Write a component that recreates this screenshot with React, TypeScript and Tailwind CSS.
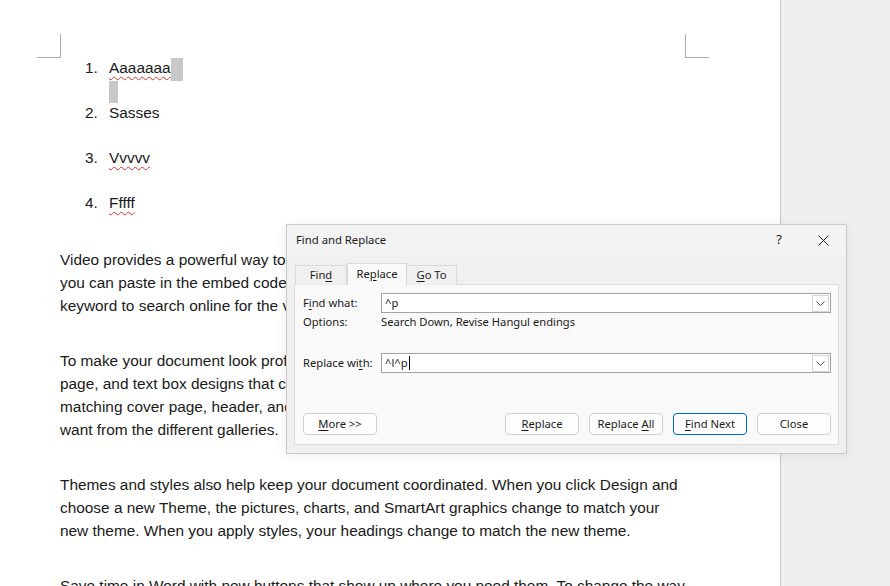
import React from 'react';

const docFont = "font-['Liberation_Sans',Arial,sans-serif]";
const uiFont = "font-['Noto_Sans','Open_Sans',sans-serif]";

const para1 = [
  'Video provides a powerful way to help you prove your point. When you click Online Video,',
  'you can paste in the embed code for the video you want to add. You can also type a',
  'keyword to search online for the video that best fits your document.',
];
const para2 = [
  'To make your document look professionally produced, Word provides header, footer, cover',
  'page, and text box designs that complement each other. For example, you can add a',
  'matching cover page, header, and sidebar. Click Insert and then choose the elements you',
  'want from the different galleries.',
];
const para3 = [
  'Themes and styles also help keep your document coordinated. When you click Design and',
  'choose a new Theme, the pictures, charts, and SmartArt graphics change to match your',
  'new theme. When you apply styles, your headings change to match the new theme.',
];
const para4 = [
  'Save time in Word with new buttons that show up where you need them. To change the way',
];

const Key = ({ children }: { children: React.ReactNode }) => (
  <span className="underline underline-offset-[2px] decoration-1">{children}</span>
);

const Misspelled = ({ children }: { children: React.ReactNode }) => (
  <span className="underline decoration-wavy decoration-[#e0302a] decoration-1 underline-offset-[3px]">{children}</span>
);

const Paragraph = ({ lines, last }: { lines: string[]; last?: boolean }) => (
  <div className={last ? '' : 'mb-[32px]'}>
    {lines.map((l) => (
      <div key={l} className="whitespace-nowrap h-[23px]">{l}</div>
    ))}
  </div>
);

const Chevron = () => (
  <svg width="9" height="5" viewBox="0 0 9 5" fill="none">
    <path d="M0.5 0.5 L4.5 4.5 L8.5 0.5" stroke="#555" strokeWidth="1" />
  </svg>
);

const ComboBox = ({ children }: { children: React.ReactNode }) => (
  <div className="w-[450px] h-[20px] border border-[#a3a3a3] bg-white flex items-center">
    <div className="flex-1 pl-[3px] flex items-center">{children}</div>
    <div className="w-[17px] h-[17px] mr-[1px] border border-[#d4d4d4] flex items-center justify-center">
      <Chevron />
    </div>
  </div>
);

const Button = ({ children, primary }: { children: React.ReactNode; primary?: boolean }) => (
  <div
    className={`w-[74px] h-[22px] rounded-[4px] bg-[#fdfdfd] border flex items-center justify-center ${
      primary ? 'border-[#0067c0]' : 'border-[#d0d0d0]'
    }`}
  >
    {children}
  </div>
);

const FindReplaceDialog = () => (
  <div
    className={`absolute left-[286px] top-[224px] w-[561px] h-[230px] border border-[#c9c9c9] bg-[#f0f0f0] shadow-[0_2px_10px_rgba(0,0,0,0.08)] flex flex-col text-[11.2px] text-[#1a1a1a] ${uiFont}`}
  >
    <div className="h-[30px] bg-[#f3f3f3] flex items-center pl-[9px]">
      <span className="text-[11.3px]">Find and Replace</span>
      <span className="ml-auto mr-[36px] text-[13px]">?</span>
      <svg width="11" height="11" viewBox="0 0 11 11" className="mr-[17px]">
        <path d="M0.5 0.5 L10.5 10.5 M10.5 0.5 L0.5 10.5" stroke="#222" strokeWidth="1" />
      </svg>
    </div>

    <div className="px-[7px] pt-[8px]">
      <div className="h-[22px] flex items-end pl-[1px]">
        <div className="w-[52px] h-[20px] border border-b-0 border-[#d9d9d9] bg-[#f0f0f0] flex items-center justify-center">
          <span>
            Fin<Key>d</Key>
          </span>
        </div>
        <div className="relative z-10 w-[60px] h-[22px] border border-b-0 border-[#d9d9d9] bg-[#f9f9f9] flex items-center justify-center pb-[1px]">
          <span>
            Re<Key>p</Key>lace
          </span>
        </div>
        <div className="w-[50px] h-[20px] border border-b-0 border-l-0 border-[#d9d9d9] bg-[#f0f0f0] flex items-center justify-center">
          <span>
            <Key>G</Key>o To
          </span>
        </div>
      </div>

      <div className="-mt-[1px] h-[161px] border border-[#dcdcdc] bg-[#f9f9f9] pt-[8px] pl-[8px] pr-[7px] flex flex-col">
        <div className="h-[20px] flex items-center">
          <div className="w-[78px]">
            F<Key>i</Key>nd what:
          </div>
          <ComboBox>
            <span>^p</span>
          </ComboBox>
        </div>
        <div className="h-[18px] flex items-center">
          <div className="w-[78px]">Options:</div>
          <div>Search Down, Revise Hangul endings</div>
        </div>
        <div className="mt-[22px] h-[20px] flex items-center">
          <div className="w-[78px]">
            Replace wi<Key>t</Key>h:
          </div>
          <ComboBox>
            <span>^l^p</span>
            <span className="w-px h-[14px] bg-black ml-px" />
          </ComboBox>
        </div>
        <div className="mt-[40px] flex items-center">
          <Button>
            <span>
              <Key>M</Key>ore &gt;&gt;
            </span>
          </Button>
          <div className="ml-auto flex gap-[10px]">
            <Button>
              <span>
                <Key>R</Key>eplace
              </span>
            </Button>
            <Button>
              <span>
                Replace <Key>A</Key>ll
              </span>
            </Button>
            <Button primary>
              <span>
                <Key>F</Key>ind Next
              </span>
            </Button>
            <Button>Close</Button>
          </div>
        </div>
      </div>
    </div>
  </div>
);

export default function App() {
  return (
    <div className="relative w-[890px] h-[586px] overflow-hidden flex bg-[#efefef]">
      <div className={`w-[780px] h-full bg-white pt-[34px] text-[15.4px] leading-[19px] text-[#1a1a1a] ${docFont}`}>
        <div className="ml-[37px] w-[672px] flex justify-between">
          <div className="w-[24px] h-[24px] border-r border-b border-[#ababab]" />
          <div className="w-[24px] h-[24px] border-l border-b border-[#ababab]" />
        </div>

        <div className="pl-[60px]">
          <div className="pl-[25px]">
            <div className="h-[45px]">
              <div className="flex h-[23px]">
                <span className="w-[24px]">1.</span>
                <Misspelled>Aaaaaaa</Misspelled>
                <span className="inline-block w-[12px] h-[23px] bg-[#c8c8c8]" />
              </div>
              <div className="pl-[24px]">
                <div className="w-[9px] h-[22px] bg-[#c8c8c8]" />
              </div>
            </div>
            <div className="h-[45px] flex">
              <span className="w-[24px]">2.</span>
              <span>Sasses</span>
            </div>
            <div className="h-[45px] flex">
              <span className="w-[24px]">3.</span>
              <Misspelled>Vvvvv</Misspelled>
            </div>
            <div className="h-[23px] mb-[34px] flex">
              <span className="w-[24px]">4.</span>
              <Misspelled>Fffff</Misspelled>
            </div>
          </div>

          <Paragraph lines={para1} />
          <Paragraph lines={para2} />
          <Paragraph lines={para3} />
          <Paragraph lines={para4} last />
        </div>
      </div>
      <div className="w-px h-full bg-[#c6c6c6]" />
      <div className="flex-1 h-full bg-[#efefef]" />

      <FindReplaceDialog />
    </div>
  );
}
